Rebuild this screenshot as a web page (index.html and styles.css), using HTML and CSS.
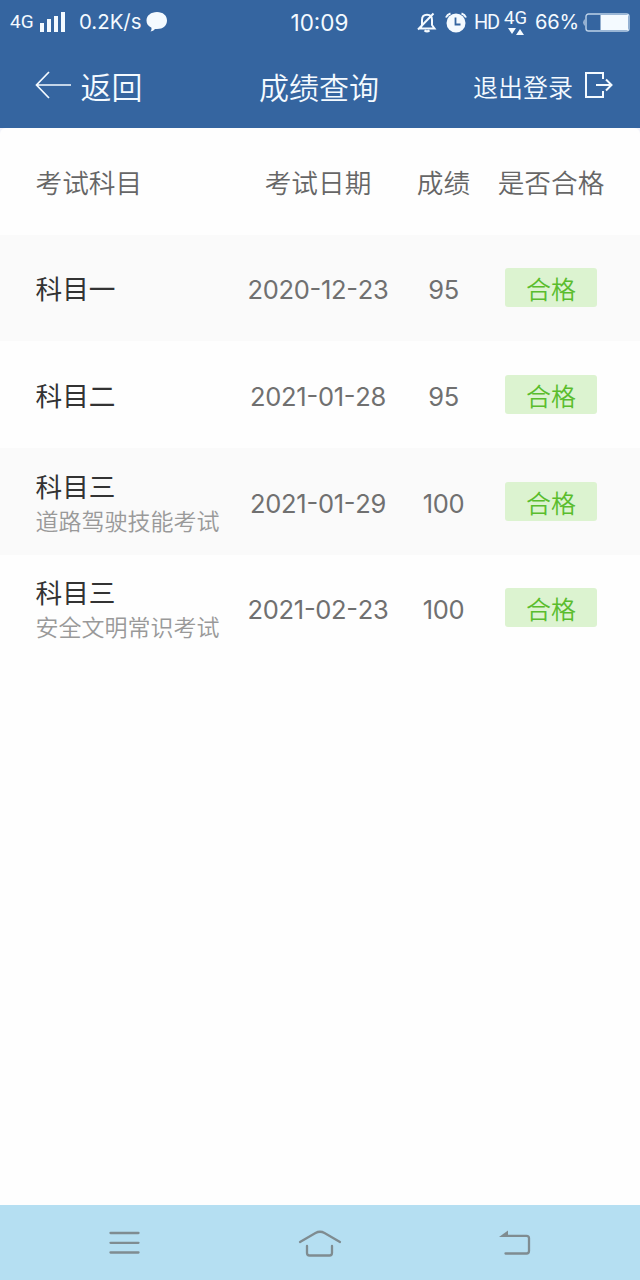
FILE: index.html
```html
<!DOCTYPE html>
<html lang="zh-CN">
<head>
<meta charset="utf-8">
<title>成绩查询</title>
<link rel="stylesheet" href="styles.css">
</head>
<body>
<div class="app">
  <div class="status">
    <div class="status-left">
      <span class="net">4G</span>
      <svg class="signal" width="26" height="20" viewBox="0 0 26 20" fill="currentColor"><path d="M0 11h4v9H0zM7 7h4v13H7zM14 4h4v16h-4zM21 0h4v20h-4z"/></svg>
      <span class="speed">0.2K/s</span>
      <svg class="chat" width="22" height="20" viewBox="0 0 22 20" fill="currentColor"><path d="M11 0C17 0 21 3.5 21 8.5S17 17 11 17L9 16.900Q7.500 19 4.500 19.500Q5.800 18 5.500 15.700C2 14.200.5 11.500.5 8.500.5 3.500 5 0 11 0z"/></svg>
    </div>
    <span class="clock">10:09</span>
    <div class="status-right">
      <svg class="bell" width="20" height="21" viewBox="0 0 20 21" fill="none" stroke="currentColor" stroke-width="2"><path d="M3 16.500L5 13.500V8Q5 2.800 10 2.800 15 2.800 15 8v5l2.500 3.500zM1 17.500L16.500 1.500"/><path d="M7.500 18.300q2.500 2 5 0" stroke-width="2.200"/></svg>
      <svg class="alarm" width="22" height="21" viewBox="0 0 22 21"><circle cx="11" cy="11" r="9.500" fill="currentColor"/><path d="M1 5.500Q2.200 2.500 5.500 1.500M21 5.500Q19.800 2.500 16.500 1.500" fill="none" stroke="currentColor" stroke-width="2"/><path d="M10.500 5.500v7H15.500" fill="none" stroke="#3565a0" stroke-width="1.800"/></svg>
      <span class="hd">HD</span>
      <span class="data"><span class="data-label">4G</span><svg width="16" height="7" viewBox="0 0 16 7" fill="currentColor"><path d="M0 0h8L4 6zM8 7h8L12 1z"/></svg></span>
      <span class="percent">66%</span>
      <svg class="battery" width="47" height="19" viewBox="0 0 47 19"><path d="M1.500 6Q-.5 9.500 1.500 13z" fill="currentColor"/><rect x="3" y="1" width="43" height="17" rx="2.500" fill="none" stroke="#bdd2e8" stroke-width="1.400"/><path d="M17.500 2H45v15H17.500z" fill="currentColor"/></svg>
    </div>
  </div>
  <header class="header">
    <a class="back"><svg width="36" height="28" viewBox="0 0 36 28" fill="none" stroke="currentColor" stroke-width="1.700"><path d="M14 1L1.500 14 14 27M1.500 14H36"/></svg><span>返回</span></a>
    <h1 class="title">成绩查询</h1>
    <a class="logout"><span>退出登录</span><svg width="29" height="28" viewBox="0 0 29 28" fill="none" stroke="currentColor" stroke-width="2"><path d="M19 8V2H2v24h17v-6M12 14h15M22 8.500L27.500 14 22 19.500"/></svg></a>
  </header>
  <main class="scores">
    <div class="row head"><span>考试科目</span><span>考试日期</span><span>成绩</span><span>是否合格</span></div>
    <div class="row"><div class="subject">科目一</div><span class="num">2020<i>-</i>12<i>-</i>23</span><span class="num">95</span><span class="badge">合格</span></div>
    <div class="row"><div class="subject">科目二</div><span class="num">2021<i>-</i>01<i>-</i>28</span><span class="num">95</span><span class="badge">合格</span></div>
    <div class="row"><div class="subject double">科目三<small>道路驾驶技能考试</small></div><span class="num">2021<i>-</i>01<i>-</i>29</span><span class="num">100</span><span class="badge">合格</span></div>
    <div class="row"><div class="subject double">科目三<small>安全文明常识考试</small></div><span class="num">2021<i>-</i>02<i>-</i>23</span><span class="num">100</span><span class="badge">合格</span></div>
  </main>
  <nav class="nav">
    <svg width="32" height="28" viewBox="0 0 32 28"><path d="M1.500 3h28M1.500 12.800h28M1.500 22.500h28"/></svg>
    <svg width="44" height="28" viewBox="0 0 44 28"><path d="M2 13L17.500 4Q22 1.500 26.500 4L42 13M9 17v7q0 2.500 2.500 2.500h20Q34 26.500 34 24v-7"/></svg>
    <svg width="33" height="28" viewBox="0 0 33 28"><path d="M8 5.800h19.500q2.500 0 2.500 2.500V21q0 2.500-2.500 2.500H6.500"/><path d="M0 6.900L9 .5v6.400z" fill="#7f8c91" stroke="none"/></svg>
  </nav>
</div>
</body>
</html>
```
FILE: styles.css
```css
* { box-sizing: border-box; }
body { margin: 0; background: #fff; font-family: Inter, "Noto Sans CJK SC", sans-serif; }
.app { width: 640px; height: 1280px; display: flex; flex-direction: column; background: linear-gradient(#3565a0 128px, #f3f4fb 128px); }
svg { display: block; flex: none; }
.status, .header { color: #f4faff; display: grid; align-items: center; }
.status { height: 44px; grid-template-columns: 290.5px 1fr 223px; white-space: nowrap; line-height: 24px; }
.status-left, .status-right { display: flex; align-items: center; }
.status-left { padding-left: 10px; }
.net { width: 30px; font: 19px/24px Roboto, sans-serif; }
.speed { width: 67px; margin-left: 13px; font-size: 20.4px; }
.clock { font-size: 22.5px; padding-top: 2px; }
.bell { margin-right: 8px; }
.alarm { margin-right: 7px; }
.hd { width: 30px; font: 20px/24px Roboto, sans-serif; letter-spacing: -1.2px; }
.data { width: 31px; display: flex; flex-direction: column; }
.data-label { font: 18.5px/17px Roboto, sans-serif; padding: 1px 0; }
.data svg { margin-left: 4px; }
.percent { width: 48px; font-size: 20px; letter-spacing: -.2px; }
.header { height: 84px; grid-template-columns: 224px 120px 1fr; padding: 0 27px 1px 35px; font-weight: 350; }
.back, .logout { display: flex; align-items: center; }
.back { gap: 9.500px; font-size: 31px; line-height: 42px; }
.back svg { margin-top: -1px; }
.back span { padding-top: 4px; }
.title { margin: 0; font-size: 30px; font-weight: 350; white-space: nowrap; }
.logout { justify-content: flex-end; gap: 11px; font-size: 25px; }
.logout svg { margin-top: -1px; }
.scores { flex: 1; background: #fefefe; border-radius: 6px 6px 0 0; }
.row { height: 106.67px; padding-left: 35.5px; display: grid; grid-template-columns: 200.5px 164px 87px 128px; align-items: center; justify-items: center; font-size: 26.67px; color: #666; }
.row > :first-child { justify-self: start; }
.row:nth-child(even) { background: #fafafa; }
.head { font-weight: 350; }
.subject { color: #333; line-height: 36px; padding-top: 2px; }
.double { padding-top: 5px; }
.subject small { display: block; font-size: 23px; line-height: 34px; font-weight: 350; color: #999; }
.num { font-size: 25.5px; letter-spacing: -.3px; padding-top: 5px; line-height: 32px; color: #707070; }
.num i { display: inline-block; font-style: normal; line-height: 20px; vertical-align: 2px; }
.badge { width: 92px; height: 39px; border-radius: 3px; background: #dcf3d0; color: #5abd2d; font-size: 25px; line-height: 44px; text-align: center; font-weight: 350; }
.nav { height: 75px; background: #b5dff2; display: flex; align-items: center; padding: 2px 0 0 109px; }
.nav svg { fill: none; stroke: #7f8c91; stroke-width: 2.300; stroke-linecap: round; stroke-linejoin: round; }
.nav svg:nth-child(2) { margin: -1px 157px 0 157px; }
```
